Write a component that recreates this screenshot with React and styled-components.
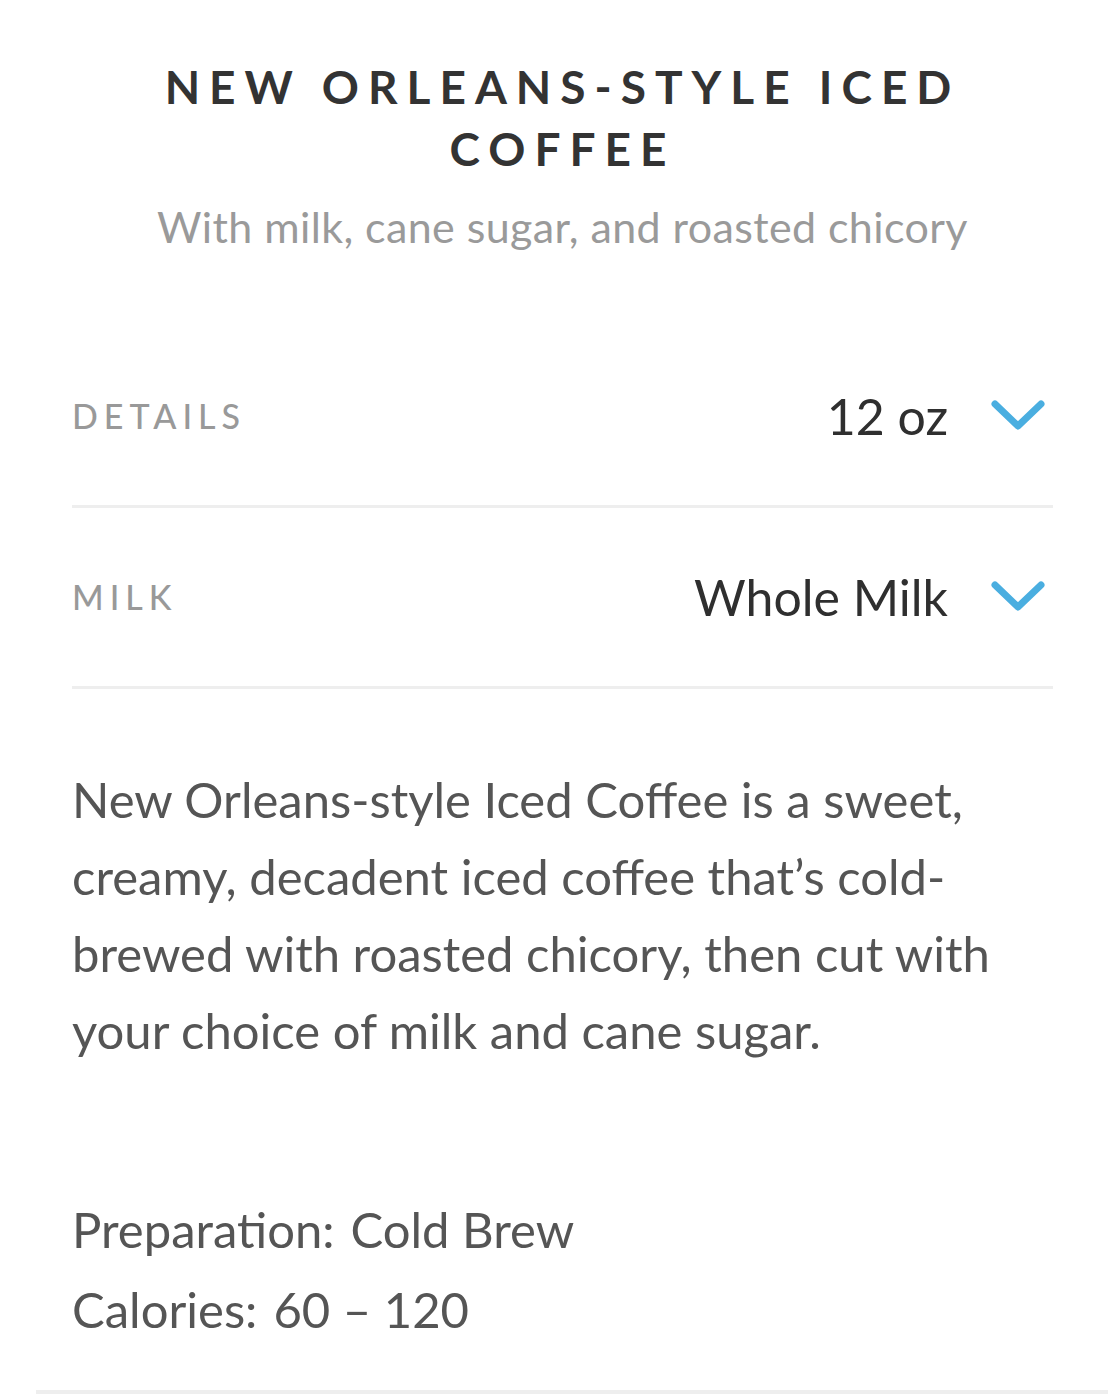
import React from "react";
import styled, { createGlobalStyle } from "styled-components";

const Global = createGlobalStyle`
  html, body { margin: 0; padding: 0; background: #fff; }
  body { font-family: Lato, "Liberation Sans", sans-serif; }
`;

const Page = styled.div`
  width: 1118px;
  height: 1394px;
  overflow: hidden;
  box-sizing: border-box;
  padding: 56px 65px 0 72px;
  display: flex;
  flex-direction: column;
  position: relative;
`;

const Title = styled.h1`
  margin: 0;
  text-align: center;
  font-size: 46px;
  font-weight: 700;
  letter-spacing: 9px;
  line-height: 62px;
  color: #333;
  padding: 0 60px;
`;

const Subtitle = styled.p`
  margin: 21px 0 0;
  text-align: center;
  font-size: 43px;
  line-height: 1.2;
  letter-spacing: 0.4px;
  font-weight: 400;
  color: #9a9a9a;
`;

const Options = styled.div`
  margin-top: 74px;
  display: flex;
  flex-direction: column;
`;

const Row = styled.div`
  display: flex;
  align-items: center;
  justify-content: space-between;
  height: 178px;
  border-bottom: 3px solid #eeeeee;
`;

const Label = styled.span`
  font-size: 34px;
  letter-spacing: 6px;
  color: #999;
  font-weight: 500;
`;

const Value = styled.div`
  display: flex;
  align-items: center;
  gap: 42px;
  padding-right: 7px;
  font-size: 50px;
  color: #2f2f2f;
`;

const Chevron = () => (
  <svg width="56" height="36" viewBox="0 0 56 36">
    <path
      d="M5 6 L28 28 L51 6"
      fill="none"
      stroke="#4aaee0"
      strokeWidth="7"
      strokeLinecap="round"
      strokeLinejoin="round"
    />
  </svg>
);

const Description = styled.p`
  margin: 72px 0 0;
  font-size: 49px;
  line-height: 77px;
  color: #555;
  padding-right: 30px;
`;

const Facts = styled.div`
  margin-top: 120px;
  font-size: 49px;
  line-height: 80px;
  color: #555;
`;

const Key = styled.span`
  margin-right: 16px;
`;

const BottomEdge = styled.div`
  position: absolute;
  left: 36px;
  right: 10px;
  bottom: 0;
  height: 4px;
  background: #eeeeee;
`;

const options = [
  { label: "DETAILS", value: "12 oz" },
  { label: "MILK", value: "Whole Milk" },
];

const App = () => (
  <>
    <Global />
    <Page>
      <Title>NEW ORLEANS-STYLE ICED COFFEE</Title>
      <Subtitle>With milk, cane sugar, and roasted chicory</Subtitle>
      <Options>
        {options.map((o) => (
          <Row key={o.label}>
            <Label>{o.label}</Label>
            <Value>
              {o.value}
              <Chevron />
            </Value>
          </Row>
        ))}
      </Options>
      <Description>
        New Orleans-style Iced Coffee is a sweet, creamy, decadent iced coffee
        that’s cold-brewed with roasted chicory, then cut with your choice of
        milk and cane sugar.
      </Description>
      <Facts>
        <div><Key>Preparation:</Key>Cold Brew</div>
        <div><Key>Calories:</Key>60 – 120</div>
      </Facts>
      <BottomEdge />
    </Page>
  </>
);

export default App;
